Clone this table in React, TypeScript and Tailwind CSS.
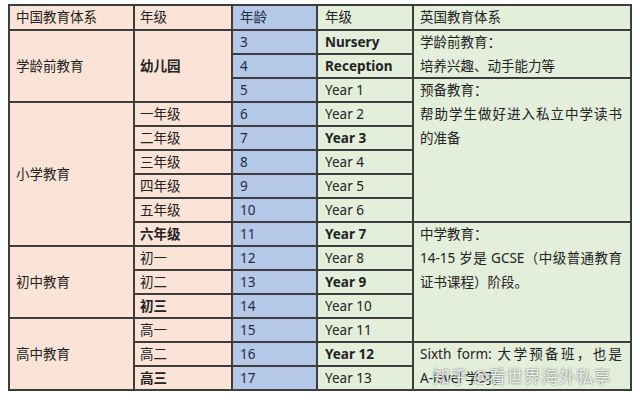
const ages = [
  { age: "3", uk: "Nursery", bold: true },
  { age: "4", uk: "Reception", bold: true },
  { age: "5", uk: "Year 1" },
  { age: "6", uk: "Year 2" },
  { age: "7", uk: "Year 3", bold: true },
  { age: "8", uk: "Year 4" },
  { age: "9", uk: "Year 5" },
  { age: "10", uk: "Year 6" },
  { age: "11", uk: "Year 7", bold: true },
  { age: "12", uk: "Year 8" },
  { age: "13", uk: "Year 9", bold: true },
  { age: "14", uk: "Year 10" },
  { age: "15", uk: "Year 11" },
  { age: "16", uk: "Year 12", bold: true },
  { age: "17", uk: "Year 13" },
];

const grades = [
  { name: "一年级", row: "row-start-5" },
  { name: "二年级", row: "row-start-6" },
  { name: "三年级", row: "row-start-7" },
  { name: "四年级", row: "row-start-8" },
  { name: "五年级", row: "row-start-9" },
  { name: "六年级", row: "row-start-10", bold: true },
  { name: "初一", row: "row-start-11" },
  { name: "初二", row: "row-start-12" },
  { name: "初三", row: "row-start-13", bold: true },
  { name: "高一", row: "row-start-14" },
  { name: "高二", row: "row-start-15" },
  { name: "高三", row: "row-start-16", bold: true },
];

const ageRows = [
  "row-start-2", "row-start-3", "row-start-4", "row-start-5", "row-start-6",
  "row-start-7", "row-start-8", "row-start-9", "row-start-10", "row-start-11",
  "row-start-12", "row-start-13", "row-start-14", "row-start-15", "row-start-16",
];

const peach = "bg-[#fbe4d7] text-[#222]";
const blue = "bg-[#b5c8e8] text-[#1e2b48]";
const green = "bg-[#e3eedb] text-[#222]";

function Line({ text, full }: { text: string; full?: boolean }) {
  return (
    <div className={full ? "leading-[24px] text-justify [text-align-last:justify]" : "leading-[24px]"}>
      {text}
    </div>
  );
}

export default function App() {
  return (
    <div className="w-[640px] h-[403px] bg-white pt-[4px] pl-[8px] font-['Noto_Sans','Noto_Sans_CJK_SC',sans-serif] text-[13.5px]">
      <div className="relative w-[624px] h-[387px] bg-[#3d3d3d] p-[2px]">
        <div className="grid h-full gap-[2px] grid-cols-[123px_96px_83px_94px_216px] grid-rows-[23px_repeat(15,22px)]">
          <div className={`${peach} col-start-1 row-start-1 flex items-center px-[6px]`}>中国教育体系</div>
          <div className={`${peach} col-start-2 row-start-1 flex items-center px-[5px]`}>年级</div>
          <div className={`${blue} col-start-3 row-start-1 flex items-center px-[7px]`}>年龄</div>
          <div className={`${green} col-start-4 row-start-1 flex items-center px-[7px]`}>年级</div>
          <div className={`${green} col-start-5 row-start-1 flex items-center px-[6px]`}>英国教育体系</div>

          <div className={`${peach} col-start-1 row-start-2 row-span-3 flex items-center px-[6px]`}>学龄前教育</div>
          <div className={`${peach} col-start-1 row-start-5 row-span-6 flex items-center px-[6px]`}>小学教育</div>
          <div className={`${peach} col-start-1 row-start-11 row-span-3 flex items-center px-[6px]`}>初中教育</div>
          <div className={`${peach} col-start-1 row-start-14 row-span-3 flex items-center px-[6px]`}>高中教育</div>

          <div className={`${peach} col-start-2 row-start-2 row-span-3 flex items-center px-[5px] font-bold`}>幼儿园</div>
          {grades.map((g) => (
            <div key={g.name} className={`${peach} col-start-2 ${g.row} flex items-center px-[5px] ${g.bold ? "font-bold" : ""}`}>
              {g.name}
            </div>
          ))}

          {ages.map((a, i) => (
            <div key={a.age} className={`${blue} col-start-3 ${ageRows[i]} flex items-center px-[7px]`}>
              {a.age}
            </div>
          ))}

          {ages.map((a, i) => (
            <div key={a.uk} className={`${green} col-start-4 ${ageRows[i]} flex items-center px-[7px] ${a.bold ? "font-bold" : ""}`}>
              {a.uk}
            </div>
          ))}

          <div className={`${green} col-start-5 row-start-2 row-span-2 px-[6px]`}>
            <div className="-mt-px">
              <Line text="学龄前教育：" />
              <Line text="培养兴趣、动手能力等" />
            </div>
          </div>
          <div className={`${green} col-start-5 row-start-4 row-span-6 pl-[6px] pr-[8px]`}>
            <div className="-mt-px">
              <Line text="预备教育：" />
              <Line text="帮助学生做好进入私立中学读书" full />
              <Line text="的准备" />
            </div>
          </div>
          <div className={`${green} col-start-5 row-start-10 row-span-5 pl-[6px] pr-[8px]`}>
            <div className="-mt-px">
              <Line text="中学教育：" />
              <Line text="14-15 岁是 GCSE（中级普通教育" full />
              <Line text="证书课程）阶段。" />
            </div>
          </div>
          <div className={`${green} col-start-5 row-start-15 row-span-2 pl-[6px] pr-[8px]`}>
            <div className="-mt-px">
              <Line text="Sixth form: 大学预备班，也是" full />
              <Line text="A-level 学习。" />
            </div>
          </div>
        </div>

        <div className="absolute left-[425px] top-[362px] text-[17px] leading-[22px] text-white/85 [text-shadow:0_0_2px_rgba(60,60,60,0.9)] tracking-[0.5px]">
          知乎 @看世界海外私享
        </div>
      </div>
    </div>
  );
}
